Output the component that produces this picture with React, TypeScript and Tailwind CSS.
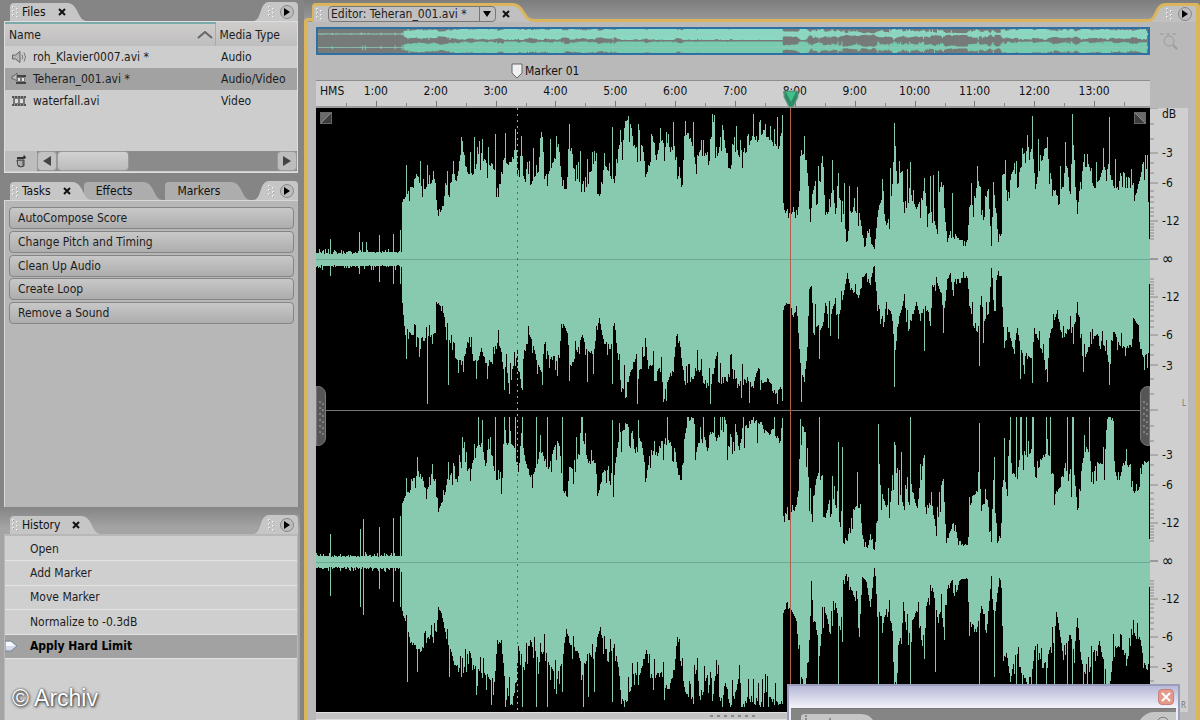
import type { ReactNode } from 'react';

type Point = [number, number];

const WAVE_WIDTH = 834;
const HALF = 151;

/** "x,height x,height" pairs, measured from the left edge and the zero line. */
function parse(text: string): Point[] {
    return text
        .trim()
        .split(/\s+/)
        .map((pair) => pair.split(',').map(Number) as Point);
}

const LEFT_TOP = parse(`
0,6 85,7 86,58 90,65 97,73 100,87 104,74 109,70 117,80 119,76 120,53 122,43 127,53 129,75 133,63 135,90 140,78 144,103 146,115
150,90 154,82 159,90 162,105 165,105 170,95 177,93 180,73 184,73 186,100 194,96 199,108 201,86 205,106 209,90 212,100
214,75 216,80 222,86 224,123 226,120 229,82 234,91 239,100 242,118 244,93 246,71 250,68 252,98 254,105 257,88 262,96
266,73 271,88 276,89 280,103 281,65 284,65 286,88 289,96 294,83 298,68 301,113 306,116 309,135 314,138 317,113 322,115
326,115 329,85 334,97 336,126 339,93 344,118 354,110 358,112 361,80 364,95 366,75 368,120 372,126 376,116 379,98 384,106
391,106 397,135 401,103 406,133 409,110 414,106 419,126 422,105 431,110 436,120 442,120 447,131 452,118 459,116 464,110
466,140 467,55 469,45 471,50 474,45 479,48 482,53 484,106 487,108 490,98 491,70 494,38 496,63 499,75 504,80 507,75
509,45 514,50 516,80 519,46 522,66 527,43 531,18 534,48 539,50 543,45 546,25 549,13 552,36 555,16 558,10 561,43 566,63
570,33 574,45 577,93 578,125 581,75 585,85 588,45 591,85 594,66 599,50 606,60 608,80 611,45 616,50 621,25 622,58 625,80
627,60 631,17 636,33 641,20 651,18 653,50 659,63 661,83 664,70 665,45 669,63 672,70 675,13 677,73 680,45 682,17 685,26
686,83 688,86 691,60 696,88 701,83 706,93 711,97 716,110 719,72 724,93 727,106 731,116 733,88 737,70 742,63 747,73
749,97 754,76 756,116 761,46 764,76 767,95 772,93 778,70 782,76 787,90 792,93 797,73 802,70 804,86 811,83 815,83
818,60 822,73 826,93 831,93 833,20`);

const LEFT_TOP_PEAKS = parse(`
14,20 43,27 46,17 50,17 63,24 77,25 84,29 90,94 104,98 111,94 117,88 131,88 137,98 146,118 158,122 154,107 166,120 172,112
179,125 189,126 199,130 205,123 217,111 225,127 234,120 240,123 253,135 264,108 271,100 276,107 288,106 296,132 312,143
322,135 344,131 357,137 369,138 377,137 398,144 437,145 449,135 454,133 461,142 466,144 488,123 502,93 506,103 516,99
522,86 528,76 533,73 541,72 566,80 574,91 578,136 594,97 591,90 614,83 617,84 622,88 636,66 655,76 661,93 689,99 700,98
706,111 711,124 716,143 722,120 731,122 744,93 749,117 756,145 768,105 780,97 787,111 793,142 799,100 815,90 827,97`);

const LEFT_BOTTOM = parse(`
0,7 85,7 86,44 88,67 94,73 102,80 109,80 118,75 119,74 120,44 123,45 126,55 128,56 129,70 133,80 137,98 146,105 151,86 153,80
157,103 162,103 165,87 169,105 177,103 180,80 184,87 187,110 191,113 194,107 199,110 201,90 205,130 207,97 213,75
217,87 222,107 225,113 228,82 232,97 241,100 245,77 247,64 251,74 254,107 261,92 266,75 271,93 277,95 281,73 283,58
287,82 294,89 298,62 301,95 305,128 311,122 316,110 320,95 322,117 330,90 332,107 344,110 348,133 352,120 357,110
361,67 364,90 369,127 376,120 381,107 386,120 394,130 400,95 402,123 411,120 417,107 421,127 431,120 437,127 442,110
447,127 452,118 457,133 466,127 467,50 471,44 476,50 481,57 484,105 488,123 491,90 493,30 495,27 497,60 502,68 506,70
509,45 514,63 519,38 522,60 527,35 531,14 534,30 539,35 542,40 546,18 549,15 552,28 558,7 561,42 566,60 570,43 576,60
578,95 581,70 588,35 591,72 596,58 600,43 604,60 610,42 614,70 616,27 621,25 625,33 627,60 631,20 634,15 637,37 641,20
651,18 653,45 657,65 662,70 665,37 667,63 672,58 675,13 678,55 681,17 685,17 687,80 689,97 691,67 697,90 701,68 704,93
711,97 716,97 718,70 724,87 731,117 733,77 741,53 746,80 754,67 757,87 761,43 764,80 767,103 772,90 781,73 787,87
794,107 797,73 804,87 815,87 818,60 822,68 827,100 832,97 833,25`);

const LEFT_BOTTOM_PEAKS = parse(`
14,17 43,15 63,23 77,25 84,25 90,100 103,98 111,145 132,126 160,120 171,120 188,131 193,135 206,131 226,126 241,117
253,122 271,123 277,115 296,125 305,133 321,145 348,140 394,145 433,144 461,145 485,143 503,100 522,80 578,128 608,92
663,107 667,84 704,120 708,115 716,124 731,123 767,113 793,126`);

const RIGHT_TOP = parse(`
0,6 85,6 86,60 91,70 94,70 97,83 101,90 106,83 109,73 114,77 118,83 121,57 122,50 126,60 131,80 136,90 141,80 144,103
146,117 151,93 156,97 159,107 162,117 166,117 169,93 172,120 176,103 180,83 185,80 187,118 194,117 199,110 202,90
205,127 209,103 214,83 219,93 224,113 229,100 232,93 236,110 241,123 244,107 246,73 251,67 253,97 259,90 265,120
268,120 272,100 279,100 282,67 286,87 289,93 293,95 297,77 301,117 304,127 311,140 316,130 320,103 323,127 327,107
330,87 334,110 340,107 346,120 354,120 358,117 361,93 365,80 367,117 371,144 377,144 379,103 383,120 389,125 391,110
394,133 401,120 406,137 411,120 416,110 419,140 423,110 426,133 431,137 441,140 451,130 457,133 464,120 466,140
467,47 474,50 479,53 482,70 484,140 489,130 491,93 494,60 496,40 498,67 502,90 506,83 508,43 512,57 516,70 520,53
522,63 527,27 531,20 534,40 539,57 543,57 546,27 551,13 554,27 558,10 561,43 563,80 569,57 574,63 577,100 581,90
582,80 588,50 591,87 597,67 601,57 604,80 607,97 611,57 616,57 620,27 622,63 627,80 630,20 634,30 638,43 642,17
651,17 653,53 657,70 662,73 665,53 671,63 675,20 677,67 682,17 684,33 686,77 688,87 691,67 693,123 696,90 701,83
704,110 711,107 716,113 719,83 724,100 731,110 735,103 738,67 746,77 750,107 755,77 757,100 761,53 764,83 768,113
771,113 776,90 781,97 788,97 791,145 797,145 798,90 802,80 807,100 814,97 817,70 822,70 826,97 832,103 833,23`);

const RIGHT_TOP_PEAKS = parse(`
14,28 44,33 47,43 63,35 77,44 84,46 90,84 101,105 116,98 132,100 146,125 158,118 162,145 166,142 179,145 188,145 193,145
199,145 206,145 220,145 231,145 246,145 260,125 265,145 266,145 296,142 322,142 351,145 387,145 398,145 437,145 503,145
522,120 526,115 541,90 562,138 578,120 585,110 594,145 607,104 663,139 678,105 688,124 694,145 700,145 704,145 705,145
710,145 716,145 717,145 730,145 734,145 751,145 756,145 757,145 773,145 787,115 810,113`);

const RIGHT_BOTTOM = parse(`
0,6 85,6 86,50 91,65 94,80 105,90 111,77 120,70 122,45 126,55 130,75 137,100 146,113 153,87 160,110 172,115 178,120
181,80 185,80 188,115 195,143 200,120 202,85 208,105 214,77 222,100 228,85 234,105 240,118 246,100 250,66 254,85
262,90 266,110 272,90 278,100 281,77 283,62 288,87 294,90 298,83 302,105 305,140 312,135 318,110 322,120 330,87
334,115 345,112 352,130 358,105 361,73 364,100 368,125 374,143 380,110 386,130 391,110 396,143 400,100 404,143
409,120 414,143 420,130 423,105 426,143 435,135 444,145 448,130 458,143 466,140 467,50 474,45 480,60 484,110 488,125
492,100 495,27 498,60 504,80 508,45 514,75 519,40 524,70 527,25 530,17 535,27 540,40 543,75 546,15 550,20 554,45
558,6 561,45 567,60 571,45 576,65 578,145 581,90 584,72 588,50 592,80 597,55 601,50 606,80 610,45 616,25 622,60
625,45 628,80 631,22 635,20 638,35 644,17 651,17 653,60 660,70 665,45 671,60 675,15 678,60 682,20 685,27 687,100
690,90 694,120 700,90 703,105 710,120 716,110 719,75 726,105 733,90 741,55 746,90 754,72 758,90 761,55 764,90
770,120 776,95 783,80 790,110 792,145 797,85 804,85 812,95 818,63 824,80 830,110 832,100 833,25`);

const RIGHT_BOTTOM_PEAKS = parse(`
14,34 44,45 47,53 63,27 77,40 84,45 91,120 101,110 133,115 160,133 175,143 189,145 194,143 206,145 220,145 231,145
246,130 267,145 272,135 278,130 296,140 348,138 502,122 522,145 526,80 562,145 594,145 608,97 619,110 663,145 678,115
700,145 706,145 712,145 720,145 730,145 738,145 751,145 756,145 767,145 776,145 788,145`);

/** One height per column: the interpolated body, a rough fringe, then the single peaks. */
function columns(body: Point[], peaks: Point[], seed: number): number[] {
    const heights: number[] = [];
    let state = seed;
    let i = 0;

    for (let x = 0; x < WAVE_WIDTH; x++) {
        while (i < body.length - 2 && body[i + 1][0] <= x) {
            i++;
        }

        const [x0, h0] = body[i];
        const [x1, h1] = body[i + 1];
        const base = h0 + ((h1 - h0) * (x - x0)) / (x1 - x0);

        state = (state * 1103515245 + 12345) % 2147483648;
        const r = state / 2147483648;
        const rough = x > 490 && x < 686 ? 1.9 : 1;
        const swing = r < 0.11 ? -0.15 : r > 0.9 ? 0.12 : (r - 0.5) * 0.08;
        const quiet = x < 86 ? Math.max(0, r * 8 - 5) : 0;

        heights.push(Math.min(145, Math.round(base * (1 + swing * rough) + quiet)));
    }

    peaks.forEach(([x, h]) => {
        heights[x] = h;
    });

    return heights;
}

function wavePath(top: number[], bottom: number[], centre: number, scale = 1, limit = HALF): string {
    const upper = top.map((h, x) => `V${centre - Math.min(limit, h * scale)}H${x + 1}`).join('');
    const lower = bottom
        .map((h, x) => `V${centre + Math.min(limit, h * scale)}H${x}`)
        .reverse()
        .join('');

    return `M0 ${centre}${upper}${lower}Z`;
}

const leftTop = columns(LEFT_TOP, LEFT_TOP_PEAKS, 7);
const leftBottom = columns(LEFT_BOTTOM, LEFT_BOTTOM_PEAKS, 19);
const rightTop = columns(RIGHT_TOP, RIGHT_TOP_PEAKS, 31);
const rightBottom = columns(RIGHT_BOTTOM, RIGHT_BOTTOM_PEAKS, 53);

const MINUTES = ['1:00', '2:00', '3:00', '4:00', '5:00', '6:00', '7:00', '8:00', '9:00', '10:00', '11:00', '12:00', '13:00'];
const MINOR_TICKS = [135, 120, 96, 86, 68, 62, 57, 51, 47, 43, 35, 32, 29, 26, 23, 20];
const MAJOR_TICKS = [151, 106, 76, 38, 0];

const FILES = [
    { name: 'roh_Klavier0007.avi *', type: 'Audio', icon: <AudioIcon /> },
    { name: 'Teheran_001.avi *', type: 'Audio/Video', icon: <AudioVideoIcon />, selected: true },
    { name: 'waterfall.avi', type: 'Video', icon: <FilmIcon /> },
];

const TASKS = ['AutoCompose Score', 'Change Pitch and Timing', 'Clean Up Audio', 'Create Loop', 'Remove a Sound'];
const HISTORY = ['Open', 'Add Marker', 'Move Marker', 'Normalize to -0.3dB', 'Apply Hard Limit'];

function AudioIcon() {
    return (
        <svg viewBox="0 0 16 14" className="h-3.5 w-4" fill="none" stroke="#666">
            <path d="M1.5 5h3L9 1.5v11L4.500 9h-3z" fill="#b5b5b5" />
            <path d="M11 4.500q1.500 2.500 0 5M13 2.500q3 4.500 0 9" stroke="#777" />
        </svg>
    );
}

function FilmIcon() {
    return (
        <svg viewBox="0 0 16 14" className="h-3.5 w-4">
            <path d="M1 2h14v2H1zM1 10h14v2H1z" fill="#555" />
            <path d="M2 4h12v6H2z" fill="#777" />
            <path d="M4 5h3v4H4zM9 5h3v4H9z" fill="#ddd" />
            <path d="M3 3h1M6 3h1M9 3h1M12 3h1M3 11h1M6 11h1M9 11h1M12 11h1" stroke="#ccc" />
        </svg>
    );
}

function AudioVideoIcon() {
    return (
        <svg viewBox="0 0 16 14" className="h-3.5 w-4">
            <path d="M1 4h2l3-3v8L3 7H1z" fill="#bbb" stroke="#666" />
            <path d="M6 3h9v2H6zM5 10h10v2H5z" fill="#444" />
            <path d="M6 5h8v5H6z" fill="#777" />
            <path d="M7 6h2v3H7zM11 6h2v3h-2z" fill="#e2e2e2" />
        </svg>
    );
}

function TrashIcon() {
    return (
        <svg viewBox="0 0 12 14" className="h-3.5 w-3">
            <path d="M2 3h6l1-2 2 2-1 2H2z" fill="#333" />
            <path d="M2 6h7v6q-3 2-6 0z" fill="#777" stroke="#444" />
            <path d="M4 7v4M6 7v5" stroke="#e5e5e5" />
        </svg>
    );
}

function Grip() {
    return (
        <svg viewBox="0 0 8 14" className="h-3.5 w-2 shrink-0" fill="#e8e8e8">
            <path d="M0 1h2v2H0zM0 5h2v2H0zM0 9h2v2H0zM4 3h2v2H4zM4 7h2v2H4zM4 11h2v2H4z" />
            <path d="M1 2h1v1H1zM1 6h1v1H1zM1 10h1v1H1zM5 4h1v1H5zM5 8h1v1H5zM5 12h1v1H5z" fill="#999" />
        </svg>
    );
}

function CloseButton({ label }: { label: string }) {
    return (
        <button type="button" aria-label={label} className="grid size-3 shrink-0 place-items-center">
            <svg viewBox="0 0 10 10" className="size-2.5" stroke="#111" strokeWidth="2">
                <path d="M2 2l6 6M8 2L2 8" />
            </svg>
        </button>
    );
}

function MenuButton({ label }: { label: string }) {
    return (
        <button
            type="button"
            aria-label={label}
            className="grid size-3.5 shrink-0 place-items-center rounded-full border border-[#888] bg-[#bcbcbc]"
        >
            <svg viewBox="0 0 8 8" className="size-2" fill="#000">
                <path d="M1 0l6 4-6 4z" />
            </svg>
        </button>
    );
}

function TabCurve({ fill }: { fill: string }) {
    return (
        <svg viewBox="0 0 20 18" preserveAspectRatio="none" className="-ml-px h-full w-5" fill={fill}>
            <path d="M0 0C12 0 10 18 20 18H0z" />
        </svg>
    );
}

function ActiveTab({ title }: { title: string }) {
    return (
        <div className="z-10 flex h-[18px]">
            <div className="flex items-center gap-0.5 rounded-tl bg-[#c6c6c6] pl-0.5 text-[#111]">
                <Grip />
                <h2 className="pr-2">{title}</h2>
                <CloseButton label={`Close ${title}`} />
            </div>
            <TabCurve fill="#c6c6c6" />
        </div>
    );
}

function IdleTab({ children }: { children: ReactNode }) {
    return (
        <div className="flex h-[18px]">
            <button type="button" className="rounded-tl bg-[#adadad] pr-3 pl-3 text-[#111]">
                {children}
            </button>
            <TabCurve fill="#adadad" />
        </div>
    );
}

function PanelCorner({ label }: { label: string }) {
    return (
        <div className="ml-auto flex h-[19px]">
            <svg viewBox="0 0 16 19" className="-mr-px h-full w-4" fill="#c6c6c6">
                <path d="M16 0C6 0 9 19 0 19h16z" />
            </svg>
            <div className="flex items-center gap-1 rounded-tr bg-[#c6c6c6] pr-1">
                <Grip />
                <MenuButton label={label} />
            </div>
        </div>
    );
}

function FilesPanel() {
    return (
        <section className="flex h-[173px] shrink-0 flex-col pt-0.5 pr-0.5 pl-1">
            <header className="flex items-end pl-1.5">
                <ActiveTab title="Files" />
                <PanelCorner label="Files menu" />
            </header>
            <div className="flex flex-1 flex-col border border-[#dedede] bg-[#cdcdcd]">
                <table className="w-full table-fixed border-collapse text-left">
                    <thead>
                        <tr className="h-[23px] bg-linear-to-b from-[#d0cccc] to-[#bebebe]">
                            <th scope="col" className="w-[210px] border-t-2 border-r border-t-[#79a9a9] border-r-[#aaa] pl-1 font-normal">
                                <div className="flex items-center justify-between pr-0.5">
                                    Name
                                    <svg viewBox="0 0 16 8" className="h-2 w-4" fill="none" stroke="#666" strokeWidth="2">
                                        <path d="M1 7l7-6 7 6" />
                                    </svg>
                                </div>
                            </th>
                            <th scope="col" className="pl-1 font-normal">
                                Media Type
                            </th>
                        </tr>
                    </thead>
                    <tbody>
                        {FILES.map((file) => (
                            <tr key={file.name} className={`h-[22px] ${file.selected ? 'bg-[#a2a2a2]' : ''}`}>
                                <td className="pl-1.5">
                                    <div className="flex items-center gap-1.5">
                                        {file.icon}
                                        {file.name}
                                    </div>
                                </td>
                                <td className="pl-1.5">{file.type}</td>
                            </tr>
                        ))}
                    </tbody>
                </table>
                <div className="mt-auto mb-px flex h-5 items-center bg-[#bdbdbd]">
                    <button type="button" aria-label="Delete file" className="grid w-8 place-items-center">
                        <TrashIcon />
                    </button>
                    <div className="flex h-full flex-1 bg-[#8b8b8b]">
                        <button type="button" aria-label="Scroll left" className="grid w-5 place-items-center rounded-sm border border-[#999] bg-[#c2c2c2]">
                            <svg viewBox="0 0 8 10" className="h-2.5 w-2" fill="#444">
                                <path d="M8 0v10L0 5z" />
                            </svg>
                        </button>
                        <div className="w-[72px] rounded-sm border border-[#999] bg-linear-to-b from-[#d2d2d2] to-[#bbb]" />
                        <button type="button" aria-label="Scroll right" className="ml-auto grid w-5 place-items-center rounded-sm border border-[#999] bg-[#bdbdbd]">
                            <svg viewBox="0 0 8 10" className="h-2.5 w-2" fill="#444">
                                <path d="M0 0v10l8-5z" />
                            </svg>
                        </button>
                    </div>
                </div>
            </div>
        </section>
    );
}

function TasksPanel() {
    return (
        <section className="flex min-h-0 flex-1 flex-col pt-2 pr-0.5 pl-1">
            <header className="flex items-end pl-1.5">
                <ActiveTab title="Tasks" />
                <div className="-ml-2 flex gap-0.5">
                    <IdleTab>Effects</IdleTab>
                    <IdleTab>Markers</IdleTab>
                </div>
                <PanelCorner label="Tasks menu" />
            </header>
            <div className="flex-1 border-t border-l border-[#d8d8d8] bg-[#b7b7b7] px-1 pt-1.5">
                <div className="flex h-[117px] flex-col justify-between">
                    {TASKS.map((task) => (
                        <button
                            key={task}
                            type="button"
                            className="h-[22px] rounded border border-[#858585] bg-linear-to-b from-[#c8c8c8] to-[#adadad] px-2 text-left"
                        >
                            {task}
                        </button>
                    ))}
                </div>
            </div>
        </section>
    );
}

function HistoryPanel() {
    return (
        <section className="relative flex h-[213px] shrink-0 flex-col bg-linear-to-b from-[#858585] to-[#a4a4a4] to-10% pt-2 pr-0.5 pl-1">
            <header className="flex items-end pl-1.5">
                <ActiveTab title="History" />
                <PanelCorner label="History menu" />
            </header>
            <div className="flex-1 border-x border-t-2 border-[#b8b8b8] bg-[#cfcfcf] pt-px">
                <ol className="grid h-[122px] grid-rows-5">
                    {HISTORY.map((step, index) => {
                        const current = index === HISTORY.length - 1;

                        return (
                            <li
                                key={step}
                                className={`flex items-center border-b border-[#e3e3e3] ${current ? 'bg-[#a2a2a2] font-bold text-black' : ''}`}
                            >
                                <span className="w-[25px]">
                                    {current && (
                                        <svg viewBox="0 0 14 14" className="size-3.5">
                                            <path d="M0 2h6l6 5-6 5H0z" fill="#d3dbea" stroke="#7d8795" />
                                            <path d="M1 3h5l4 4H1z" fill="#f8faff" />
                                        </svg>
                                    )}
                                </span>
                                {step}
                            </li>
                        );
                    })}
                </ol>
            </div>
            <p className="absolute bottom-2 left-3 font-['Liberation_Sans',Arial,sans-serif] text-[23px] leading-7 text-white [text-shadow:1px_1px_3px_#222,0_0_2px_#444]">
                © Archiv
            </p>
        </section>
    );
}

function EditorTabs() {
    return (
        <header className="flex h-[22px] shrink-0 items-end bg-linear-to-b from-[#7d7d7d] to-[#9b9b9b]">
            <div className="h-1 w-2 rounded-tl-sm border-t-3 border-l-4 border-[#dab55c]" />
            <div className="flex h-[19px] items-center gap-1 rounded-tl border-t-3 border-l-2 border-[#dab55c] bg-[#c0c0c0] pl-0.5">
                <Grip />
                <div className="flex h-4 items-center rounded-sm border border-[#777]">
                    <h1 className="pr-2 pl-0.5">Editor: Teheran_001.avi *</h1>
                    <button type="button" aria-label="Choose file" className="ml-1 grid h-full w-4 place-items-center border-l border-[#777]">
                        <svg viewBox="0 0 8 6" className="h-1.5 w-2" fill="#000">
                            <path d="M0 0h8L4 6z" />
                        </svg>
                    </button>
                </div>
                <CloseButton label="Close editor" />
            </div>
            <svg viewBox="0 0 22 19" className="h-[19px] w-[22px] shrink-0">
                <path d="M0 1.500C12 1.500 9 17 22 17.500V19H0z" fill="#c0c0c0" />
                <path d="M0 1.500C13 1.500 10 17.500 22 17.500" fill="none" stroke="#dab55c" strokeWidth="3" />
            </svg>
            <div className="flex-1 border-t-3 border-[#dab55c]" />
            <svg viewBox="0 0 18 19" className="h-[19px] w-[18px] shrink-0">
                <path d="M18 1.500C6 1.500 10 17 0 17.500V19h18z" fill="#c0c0c0" />
                <path d="M18 1.500C6 1.500 10 17.500 0 17.500" fill="none" stroke="#dab55c" strokeWidth="3" />
            </svg>
            <div className="flex h-[19px] items-center gap-1 rounded-tr border-t-3 border-r-4 border-[#dab55c] bg-[#c0c0c0] pr-1">
                <Grip />
                <MenuButton label="Editor menu" />
            </div>
        </header>
    );
}

function Overview() {
    return (
        <div className="h-7 flex-1 border-2 border-[#2f70a4] bg-[#767b79]">
            <svg viewBox="0 0 834 24" preserveAspectRatio="none" className="block size-full">
                <path d={wavePath(leftTop, leftBottom, 5, 0.053, 6)} fill="#8ad8c2" />
                <path d={wavePath(rightTop, rightBottom, 18.5, 0.053, 6)} fill="#78cbae" />
                <path d="M0 5h834M0 18.500h834" stroke="#9cc4b6" strokeOpacity="0.5" />
            </svg>
        </div>
    );
}

function TimeRuler() {
    return (
        <div className="relative flex h-7 border-t border-b-2 border-t-[#8d8d8d] border-b-[#9b9b9b] bg-[#cfcfcf] leading-5 text-[#111]">
            <div className="w-0 grow-30">
                <span className="ml-1">HMS</span>
            </div>
            {MINUTES.map((minute) => (
                <div key={minute} className="flex w-0 grow-60 flex-col items-center justify-between">
                    {minute}
                    <div className="flex w-full items-end justify-center">
                        <div className="mr-auto h-1 w-px bg-[#888]" />
                        <div className="mr-auto h-1.5 w-px bg-[#777]" />
                    </div>
                </div>
            ))}
            <div className="flex w-0 grow-26 items-end">
                <div className="h-1 w-px bg-[#888]" />
            </div>
            <svg viewBox="0 0 16 18" className="absolute -bottom-0.5 left-[56.9%] z-10 h-[18px] w-4 -translate-x-1/2">
                <path d="M1 1h14v6l-5 10H6L1 7z" fill="#2f8a66" stroke="#6d9c88" />
                <path d="M3 2h10L8 12z" fill="#3fbf8a" />
            </svg>
        </div>
    );
}

function ResizeGrip({ side }: { side: 'left' | 'right' }) {
    return (
        <div
            className={`absolute top-[46%] h-[60px] w-2.5 border border-[#777] bg-[#555] ${side === 'left' ? 'left-0 rounded-r-lg' : 'right-0 rounded-l-lg'}`}
        >
            <svg viewBox="0 0 8 58" className="size-full">
                <path d="M3 14v32M6 16v32" stroke="#aaa" strokeDasharray="2 4" />
            </svg>
        </div>
    );
}

function ChannelFold({ flip = false }: { flip?: boolean }) {
    return (
        <svg viewBox="0 0 12 12" className={`absolute top-1 size-3 ${flip ? 'right-1 -scale-x-100' : 'left-1'}`}>
            <path d="M0 0h12v12H0z" fill="#6a6a6a" />
            <path d="M11 1v10H1z" fill="#3c3c3c" />
            <path d="M1 11L11 1" stroke="#8a8a8a" />
            <path d="M.5.5h11v11H.5z" fill="none" stroke="#666" />
        </svg>
    );
}

function Waveform() {
    return (
        <div className="relative min-h-0 flex-1 bg-black">
            <svg viewBox="0 0 834 604" preserveAspectRatio="none" className="block size-full" shapeRendering="crispEdges">
                <path d={wavePath(leftTop, leftBottom, HALF)} fill="#87cab0" />
                <path d={wavePath(rightTop, rightBottom, HALF * 3 + 1)} fill="#87cab0" />
                <path d="M0 151h834M0 454h834" stroke="#6fa995" />
                <path d="M0 302h834" stroke="#777" />
                <path d="M201.500 0v604" stroke="#9ab" strokeDasharray="2 4" />
                <path d="M201.500 66v174M201.500 366v172" stroke="#87cab0" />
                <path d="M201.500 66v174M201.500 366v172" stroke="#357a64" strokeDasharray="2 4" />
                <path d="M474.500 0v604" stroke="#b5604f" />
            </svg>
            <ChannelFold />
            <ChannelFold flip />
            <ResizeGrip side="left" />
            <ResizeGrip side="right" />
        </div>
    );
}

function DecibelScale({ unit, channel }: { unit?: string; channel: string }) {
    return (
        <div className="relative flex min-h-0 flex-1 flex-col pl-3 text-[#111]">
            <svg viewBox="0 0 10 302" preserveAspectRatio="none" className="absolute top-0 left-0 h-full w-2.5" stroke="#888">
                {MINOR_TICKS.map((y) => (
                    <path key={y} d={`M0 ${HALF - y}h4M0 ${HALF + y}h4`} />
                ))}
                {MAJOR_TICKS.map((y) => (
                    <path key={y} d={`M0 ${HALF - y}h8M0 ${HALF + y}h8`} />
                ))}
            </svg>
            <div className="h-0 grow-33 leading-3">{unit}</div>
            <div className="flex h-0 grow-23 items-center">-3</div>
            <div className="flex h-0 grow-38 items-center">-6</div>
            <div className="flex h-0 grow-38 items-center">-12</div>
            <div className="flex h-0 grow-38 items-center text-base">∞</div>
            <div className="flex h-0 grow-38 items-center">-12</div>
            <div className="flex h-0 grow-38 items-center">-6</div>
            <div className="flex h-0 grow-23 items-center">-3</div>
            <div className="flex h-0 grow-33 items-end justify-end pr-0.5 text-[8px] text-[#777]">{channel}</div>
        </div>
    );
}

function FloatingWindow() {
    return (
        <div className="absolute right-5 bottom-0 flex h-9 w-[393px] flex-col border-2 border-b-0 border-[#9a9dbd] bg-[#ececf4]">
            <div className="flex h-[22px] items-center justify-end bg-linear-to-b from-[#b6b8d6] to-[#f4f4fa] pr-1">
                <button type="button" aria-label="Close window" className="grid size-4 place-items-center rounded-sm border border-[#c98080] bg-[#e39a88]">
                    <svg viewBox="0 0 10 10" className="size-2.5" stroke="#fff" strokeWidth="2">
                        <path d="M1 1l8 8M9 1L1 9" />
                    </svg>
                </button>
            </div>
            <div className="mx-0.5 flex flex-1 items-end justify-between border-t border-[#777] bg-[#858585] pl-2.5">
                <svg viewBox="0 0 76 8" className="h-2 w-[76px]">
                    <path d="M0 8V5q0-3 4-3h56q8 0 12 6z" fill="#c6c6c6" />
                    <path d="M4 4h2M4 7h2M28 7h2" stroke="#555" />
                </svg>
                <svg viewBox="0 0 36 8" className="h-2 w-9">
                    <path d="M0 8q6-8 14-8h22v8z" fill="#c6c6c6" />
                    <path d="M18 8a6 6 0 0 1 10 0" fill="none" stroke="#777" />
                </svg>
            </div>
        </div>
    );
}

function Editor() {
    return (
        <main className="relative flex min-w-0 flex-1 flex-col">
            <EditorTabs />
            <div className="flex min-h-0 flex-1 border-x-4 border-[#dab55c] bg-[#b9b9b9] pl-2">
                <div className="flex min-w-0 flex-1 flex-col">
                    <div className="flex pt-[5px]">
                        <Overview />
                    </div>
                    <div className="relative h-[25px]">
                        <div className="absolute bottom-px left-[24.1%] flex -translate-x-1.5 items-center gap-0.5 text-[#111]">
                            <svg viewBox="0 0 12 16" className="h-4 w-3">
                                <path d="M1 1h10v9l-5 5-5-5z" fill="#f0f0f0" stroke="#666" />
                            </svg>
                            Marker 01
                        </div>
                    </div>
                    <TimeRuler />
                    <Waveform />
                    <div className="grid h-2 place-items-center border-y border-[#e0e0e0] bg-[#c3c3c3]">
                        <svg viewBox="0 0 46 4" className="h-1 w-[46px]" stroke="#888" strokeWidth="2">
                            <path d="M0 2h46" strokeDasharray="3 4" />
                        </svg>
                    </div>
                </div>
                <div className="flex w-[46px] flex-col pr-2">
                    <button type="button" aria-label="Zoom to selection" className="grid h-[86px] justify-center pt-2.5">
                        <svg viewBox="0 0 20 20" className="size-5" fill="none" stroke="#999">
                            <path d="M1 2h17" strokeDasharray="4 2" />
                            <circle cx="10" cy="9" r="5" />
                            <path d="M14 13l4 4" strokeWidth="2" />
                        </svg>
                    </button>
                    <div className="flex min-h-0 flex-1 flex-col bg-[#cfcfcf]">
                        <DecibelScale unit="dB" channel="L" />
                        <DecibelScale channel="R" />
                    </div>
                    <div className="h-2" />
                </div>
            </div>
            <FloatingWindow />
        </main>
    );
}

export default function App() {
    return (
        <div className="flex h-screen gap-1 overflow-hidden bg-[#858585] font-['DejaVu_Sans_Condensed','DejaVu_Sans',sans-serif] text-xs text-[#1c1c1c]">
            <aside className="flex w-[300px] shrink-0 flex-col">
                <FilesPanel />
                <TasksPanel />
                <HistoryPanel />
            </aside>
            <Editor />
        </div>
    );
}
